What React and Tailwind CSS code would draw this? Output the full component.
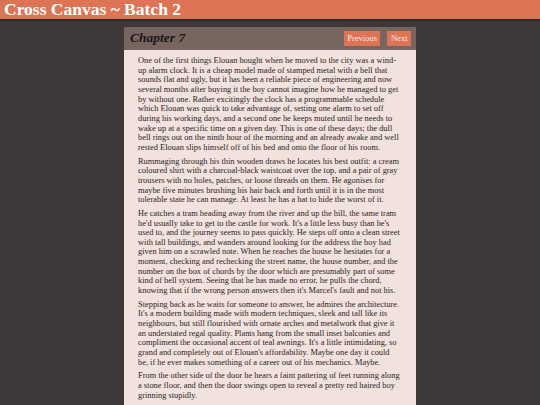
import React from "react";

const paragraphs = [
  "One of the first things Elouan bought when he moved to the city was a wind-up alarm clock. It is a cheap model made of stamped metal with a bell that sounds flat and ugly, but it has been a reliable piece of engineering and now several months after buying it the boy cannot imagine how he managed to get by without one. Rather excitingly the clock has a programmable schedule which Elouan was quick to take advantage of, setting one alarm to set off during his working days, and a second one he keeps muted until he needs to wake up at a specific time on a given day. This is one of these days; the dull bell rings out on the ninth hour of the morning and an already awake and well rested Elouan slips himself off of his bed and onto the floor of his room.",
  "Rummaging through his thin wooden draws he locates his best outfit: a cream coloured shirt with a charcoal-black waistcoat over the top, and a pair of gray trousers with no holes, patches, or loose threads on them. He agonises for maybe five minutes brushing his hair back and forth until it is in the most tolerable state he can manage. At least he has a hat to hide the worst of it.",
  "He catches a tram heading away from the river and up the hill, the same tram he'd usually take to get to the castle for work. It's a little less busy than he's used to, and the journey seems to pass quickly. He steps off onto a clean street with tall buildings, and wanders around looking for the address the boy had given him on a scrawled note. When he reaches the house he hesitates for a moment, checking and rechecking the street name, the house number, and the number on the box of chords by the door which are presumably part of some kind of bell system. Seeing that he has made no error, he pulls the chord, knowing that if the wrong person answers then it's Marcel's fault and not his.",
  "Stepping back as he waits for someone to answer, he admires the architecture. It's a modern building made with modern techniques, sleek and tall like its neighbours, but still flourished with ornate arches and metalwork that give it an understated regal quality. Plants hang from the small inset balconies and compliment the occasional accent of teal awnings. It's a little intimidating, so grand and completely out of Elouan's affordability. Maybe one day it could be, if he ever makes something of a career out of his mechanics. Maybe.",
  "From the other side of the door he hears a faint pattering of feet running along a stone floor, and then the door swings open to reveal a pretty red haired boy grinning stupidly.",
];

export default function App() {
  return (
    <div className="h-[405px] overflow-hidden bg-[#3e3938] font-['Liberation_Serif',serif]">
      {/* Title bar */}
      <div className="h-[19px] bg-[#dd7456] shadow-[0_2px_1px_#2e2929] pl-1">
        <h1 className="text-[17.5px] leading-[19px] font-bold text-white">Cross Canvas ~ Batch 2</h1>
      </div>

      <div className="w-[292px] mx-auto mt-2">
        {/* Chapter header */}
        <div className="h-[23px] bg-[#776660] flex items-center justify-between pl-1.5 pr-[5px]">
          <h2 className="text-[13.5px] font-bold italic text-[#1c1616]">Chapter 7</h2>
          <div className="flex gap-[7px]">
            <button className="h-[15px] px-[3.5px] bg-[#dd7456] text-[#f6e8e2] text-[8.5px] leading-[15px]">Previous</button>
            <button className="h-[15px] px-[3.5px] bg-[#dd7456] text-[#f6e8e2] text-[8.5px] leading-[15px]">Next</button>
          </div>
        </div>

        {/* Chapter body */}
        <div className="bg-[#f2e2dd] pl-[14px] pr-[16px] pt-[6px] pb-10 text-[8.4px] leading-[9.65px] text-[#2b2525]">
          {paragraphs.map((p, i) => (
            <p key={i} className="mb-1">{p}</p>
          ))}
        </div>
      </div>
    </div>
  );
}
